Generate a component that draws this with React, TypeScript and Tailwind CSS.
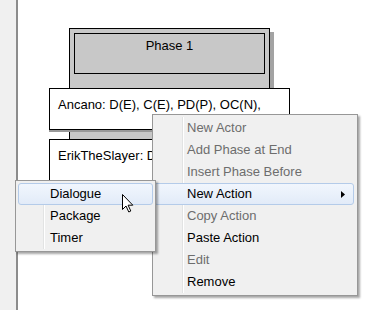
import React from 'react';

const MENU_ITEMS: { label: string; disabled?: boolean; active?: boolean; sub?: boolean }[] = [
  { label: 'New Actor', disabled: true },
  { label: 'Add Phase at End', disabled: true },
  { label: 'Insert Phase Before', disabled: true },
  { label: 'New Action', active: true, sub: true },
  { label: 'Copy Action', disabled: true },
  { label: 'Paste Action' },
  { label: 'Edit', disabled: true },
  { label: 'Remove' },
];

const SUB_ITEMS = [
  { label: 'Dialogue', active: true },
  { label: 'Package' },
  { label: 'Timer' },
];

export default function App() {
  return (
    <div className="relative flex w-[378px] h-[310px] overflow-hidden bg-white font-['Liberation_Sans',Arial,sans-serif] text-[13px] text-black">
      <div className="w-[16px] bg-[#f0f0f0]" />
      <div className="w-[2px] bg-[#8c8c8c]" />
      <div className="flex-1 pl-[51px] pt-[28px]">
        <div className="w-[201px] border border-black bg-[#c8c8c8] p-[4px] pb-[8px] shadow-[4px_4px_0_#a3a3a3]">
          <div className="h-[41px] border border-black pt-[4px] text-center leading-[15px]">Phase 1</div>
          <ActorBox className="mt-[14px] shadow-[0_2px_0_#999999]">Ancano: D(E), C(E), PD(P), OC(N),</ActorBox>
          <ActorBox className="mt-[9px]">ErikTheSlayer: D(E), C(E), PD(P),</ActorBox>
        </div>
      </div>

      {/* context menu */}
      <div className="absolute left-[152px] top-[114px] w-[206px] border border-[#979797] bg-[#f0f0f0] py-[2px] shadow-[2px_2px_2px_rgba(0,0,0,0.35)]">
        <div className="absolute left-[29px] top-[2px] bottom-[2px] w-[2px] border-l border-[#e2e3e3] bg-white" />
        {MENU_ITEMS.map((it) => (
          <div key={it.label}
            className={`relative ml-[1px] mr-[3px] flex h-[22px] items-center rounded-[3px] border pl-[32px] leading-[22px] ${
              it.active ? 'border-[#b4cbe9] bg-gradient-to-b from-[#f1f6fd] to-[#e2ebf8]' : 'border-transparent'
            } ${it.disabled ? 'text-[#6d6d6d]' : 'text-black'}`}>
            <span className="flex-1">{it.label}</span>
            {it.sub && (
              <svg width="4" height="7" viewBox="0 0 4 7" className="mr-[8px]">
                <path d="M0 0 L4 3.5 L0 7 Z" fill="#000" />
              </svg>
            )}
          </div>
        ))}
      </div>

      {/* submenu */}
      <div className="absolute left-[15px] top-[180px] w-[141px] border border-[#979797] bg-[#f0f0f0] py-[2px] shadow-[2px_2px_2px_rgba(0,0,0,0.35)]">
        <div className="absolute left-[27px] top-[2px] bottom-[2px] w-[2px] border-l border-[#e2e3e3] bg-white" />
        {SUB_ITEMS.map((it) => (
          <div key={it.label}
            className={`relative mx-[2px] h-[22px] rounded-[3px] border pl-[31px] leading-[20px] ${
              it.active ? 'border-[#b4cbe9] bg-gradient-to-b from-[#f1f6fd] to-[#e2ebf8]' : 'border-transparent'
            }`}>
            {it.label}
          </div>
        ))}
      </div>

      {/* mouse pointer */}
      <svg width="13" height="20" viewBox="0 0 13 20" className="absolute left-[121px] top-[193px]">
        <path d="M1.5 1.5 L1.5 16.5 L5 13 L7.8 19 L9.8 18 L7.1 12.2 L11.8 12.2 Z" fill="#fff" stroke="#000" strokeWidth="1" strokeLinejoin="miter" />
      </svg>
    </div>
  );
}

function ActorBox({ className, children }: { className?: string; children: React.ReactNode }) {
  return (
    <div className={`relative mx-[-25px] h-[42px] border border-black bg-white pl-[8px] pt-[8px] leading-[15px] whitespace-nowrap overflow-hidden ${className ?? ''}`}>
      {children}
    </div>
  );
}
